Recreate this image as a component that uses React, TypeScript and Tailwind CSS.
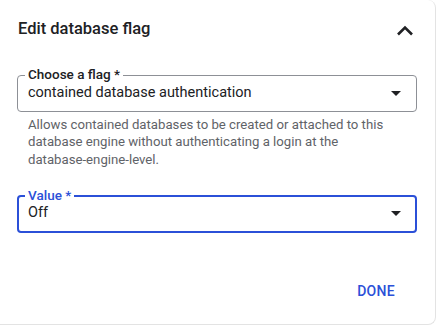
const ChevronUp = () => (
  <svg width="18" height="11" viewBox="0 0 18 11" className="text-[#202124] mt-[2px]">
    <polyline points="2,9.5 9,2.5 16,9.5" fill="none" stroke="currentColor" strokeWidth="2.6" />
  </svg>
);

const ArrowDrop = () => (
  <svg width="24" height="24" viewBox="0 0 24 24" className="text-[#202124]">
    <path d="M7 10l5 5 5-5z" fill="currentColor" />
  </svg>
);

const SelectField = ({
  label,
  value,
  focused,
}: {
  label: string;
  value: string;
  focused?: boolean;
}) => (
  <div
    className={
      focused
        ? 'relative h-[38px] rounded-[4px] border-2 border-[#2b50d8] flex items-center pl-[9px] pr-[7px] pb-[2px]'
        : 'relative h-[37px] rounded-[4px] border border-[#8d9096] flex items-center pl-[10px] pr-[8px] pb-[2px]'
    }
  >
    <span
      className={
        focused
          ? 'absolute left-[6px] top-[-10px] bg-white px-[3px] text-[13.5px] leading-[16px] font-medium text-[#2b50d8]'
          : 'absolute left-[7px] top-[-10px] bg-white px-[3px] text-[13.5px] leading-[16px] font-medium text-[#202124]'
      }
    >
      {label}
    </span>
    <span className="flex-1 text-[14.5px] leading-[20px] text-[#202124]">{value}</span>
    <ArrowDrop />
  </div>
);

const App = () => {
  return (
    <div className="w-[437px] h-[326px] bg-white font-['Roboto',sans-serif]">
      <div className="w-[436px] h-[325px] border-r border-b border-[#e3e3e3] rounded-tr-lg rounded-br-lg flex flex-col">
        <div className="flex items-center justify-between h-[24px] pl-[18px] pr-[21px] mt-[17px]">
          <h2 className="text-[16.5px] leading-[24px] font-medium text-[#202124]">Edit database flag</h2>
          <ChevronUp />
        </div>
        <div className="pl-[17px] pr-[18px] mt-[34px]">
          <SelectField label="Choose a flag *" value="contained database authentication" />
          <p className="mt-[4px] pl-[11px] pr-[30px] text-[13.2px] leading-[17.4px] text-[#5f6368]">
            Allows contained databases to be created or attached to this database engine without
            authenticating a login at the database-engine-level.
          </p>
          <div className="mt-[27px]">
            <SelectField label="Value *" value="Off" focused />
          </div>
        </div>
        <div className="flex justify-end pr-[40px] mt-[48px]">
          <button className="text-[14px] leading-[20px] font-medium tracking-[0.3px] text-[#2b50d8]">DONE</button>
        </div>
      </div>
    </div>
  );
};

export default App;
